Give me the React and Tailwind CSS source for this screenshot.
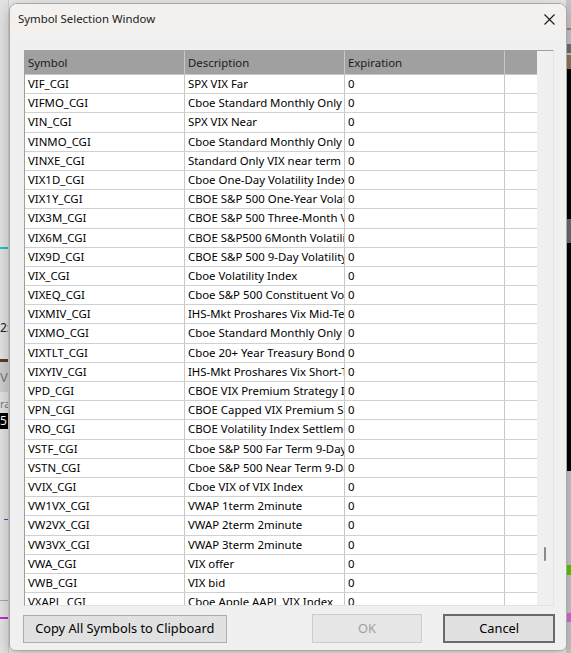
import React from 'react';

const rows = [
  ['VIF_CGI', 'SPX VIX Far'],
  ['VIFMO_CGI', 'Cboe Standard Monthly Only VIX Far'],
  ['VIN_CGI', 'SPX VIX Near'],
  ['VINMO_CGI', 'Cboe Standard Monthly Only VIX Near'],
  ['VINXE_CGI', 'Standard Only VIX near term'],
  ['VIX1D_CGI', 'Cboe One-Day Volatility Index'],
  ['VIX1Y_CGI', 'CBOE S&P 500 One-Year Volatility Index'],
  ['VIX3M_CGI', 'CBOE S&P 500 Three-Month Volatility Index'],
  ['VIX6M_CGI', 'CBOE S&P500 6Month Volatility Index'],
  ['VIX9D_CGI', 'CBOE S&P 500 9-Day Volatility Index'],
  ['VIX_CGI', 'Cboe Volatility Index'],
  ['VIXEQ_CGI', 'Cboe S&P 500 Constituent Volatility'],
  ['VIXMIV_CGI', 'IHS-Mkt Proshares Vix Mid-Term'],
  ['VIXMO_CGI', 'Cboe Standard Monthly Only VIX'],
  ['VIXTLT_CGI', 'Cboe 20+ Year Treasury Bond ETF Volatility'],
  ['VIXYIV_CGI', 'IHS-Mkt Proshares Vix Short-Term'],
  ['VPD_CGI', 'CBOE VIX Premium Strategy Index'],
  ['VPN_CGI', 'CBOE Capped VIX Premium Strategy'],
  ['VRO_CGI', 'CBOE Volatility Index Settlement'],
  ['VSTF_CGI', 'Cboe S&P 500 Far Term 9-Day'],
  ['VSTN_CGI', 'Cboe S&P 500 Near Term 9-Day'],
  ['VVIX_CGI', 'Cboe VIX of VIX Index'],
  ['VW1VX_CGI', 'VWAP 1term 2minute'],
  ['VW2VX_CGI', 'VWAP 2term 2minute'],
  ['VW3VX_CGI', 'VWAP 3term 2minute'],
  ['VWA_CGI', 'VIX offer'],
  ['VWB_CGI', 'VIX bid'],
  ['VXAPL_CGI', 'Cboe Apple AAPL VIX Index'],
];

const font = { fontFamily: '"Noto Sans", "Open Sans", sans-serif' };

function Cell({ children, last }) {
  return (
    <div className={`h-full overflow-hidden whitespace-nowrap pl-[3px] leading-[18px] ${last ? 'flex-1' : 'w-[160px] shrink-0 border-r border-[#c8c8c8]'}`}>
      {children}
    </div>
  );
}

// slivers of the trading app that peek out on both sides of the dialog
function LeftEdge() {
  return (
    <div className="flex h-full w-[9px] flex-col overflow-hidden border-r border-[#cfcfcf] bg-[#e4e4e4] text-[#222]">
      <div className="h-[247px] shrink-0" />
      <div className="h-[2px] shrink-0 bg-[#19c6cf]" />
      <div className="h-[71px] shrink-0" />
      <div className="h-[16px] shrink-0 text-[12px] leading-[16px]">2:</div>
      <div className="h-[23px] shrink-0" />
      <div className="h-[3px] shrink-0 bg-[#5a3b2a]" />
      <div className="h-[30px] shrink-0 bg-[#cfcfcf] text-[13px] leading-[30px] text-[#777]">V</div>
      <div className="h-[21px] shrink-0 pt-[5px] text-[11px] leading-[14px] text-[#777]">ra</div>
      <div className="h-[16px] shrink-0 bg-black text-[12px] leading-[16px] text-white">5</div>
      <div className="h-[90px] shrink-0" />
      <div className="ml-[4px] h-[1px] shrink-0 bg-[#3050d0]" />
      <div className="h-[80px] shrink-0" />
      <div className="h-[1px] shrink-0 bg-[#a8a8a8]" />
      <div className="h-[16px] shrink-0" />
      <div className="h-[2px] shrink-0 bg-[#c02bd0]" />
    </div>
  );
}

function RightEdge() {
  return (
    <div className="flex h-full w-[5px] flex-col bg-[#c8c8c8]">
      <div className="h-[28px] shrink-0" />
      <div className="h-[2px] shrink-0 bg-[#8a8a8a]" />
      <div className="h-[14px] shrink-0" />
      <div className="h-[9px] shrink-0 bg-[#707070]" />
      <div className="h-[2px] shrink-0" />
      <div className="h-[14px] shrink-0 bg-[#8c7a55]" />
      <div className="flex h-[402px] shrink-0 flex-col bg-black">
        <div className="h-[150px] shrink-0" />
        <div className="h-[24px] shrink-0 bg-[#6c6c6c]" />
      </div>
      <div className="h-[94px] shrink-0" />
      <div className="h-[10px] shrink-0 bg-[#5fc800]" />
      <div className="h-[38px] shrink-0" />
      <div className="h-[9px] shrink-0 bg-[#d070d8]" />
    </div>
  );
}

export default function App() {
  return (
    <div className="relative flex h-[653px] w-[571px] justify-between overflow-hidden bg-[#e9e9e9]" style={font}>
      <LeftEdge />
      <RightEdge />

      <div className="absolute left-[9px] top-[3px] flex h-[648px] w-[558px] flex-col overflow-hidden rounded-t-[8px] rounded-b-[6px] border border-[#a9a9a9] bg-[#f0f0f0] shadow-[0_4px_16px_rgba(0,0,0,0.25)]">
        <div className="flex h-[30px] shrink-0 items-center justify-between bg-[#f3f0ed] pl-[8px]">
          <span className="text-[11.4px] text-[#1a1a1a]">Symbol Selection Window</span>
          <div className="flex h-full w-[34px] items-center justify-center">
            <svg width="11" height="11" viewBox="0 0 11 11" className="text-[#1a1a1a]">
              <path d="M0.5 0.5 L10.5 10.5 M10.5 0.5 L0.5 10.5" stroke="currentColor" strokeWidth="1.1" />
            </svg>
          </div>
        </div>

        <div className="ml-[14px] mt-[16px] flex h-[556px] w-[530px] shrink-0 border border-t-[#a0a0a0] border-l-[#a0a0a0] border-r-[#e3e3e3] border-b-[#e3e3e3]">
          <div className="flex w-[512px] flex-col overflow-hidden bg-white text-[11.4px] text-black">
            <div className="flex h-[24px] shrink-0 border-b border-[#c8c8c8] bg-[#a0a0a0] text-[#1a1a1a]">
              {['Symbol', 'Description', 'Expiration', ''].map((h, i) => (
                <div key={i} className={`h-full overflow-hidden whitespace-nowrap pl-[3px] leading-[23px] ${i === 3 ? 'flex-1' : 'w-[160px] shrink-0 border-r border-[#c8c8c8]'}`}>
                  {h}
                </div>
              ))}
            </div>
            {rows.map(([sym, desc]) => (
              <div key={sym} className="flex h-[19.2px] shrink-0 border-b border-[#d0d0d0]">
                <Cell>{sym}</Cell>
                <Cell>{desc}</Cell>
                <Cell>0</Cell>
                <Cell last />
              </div>
            ))}
          </div>
          <div className="flex flex-1 flex-col items-center bg-[#f0f0f0] pt-[496px]">
            <div className="h-[14px] w-[2px] rounded-full bg-[#8a8a8a]" />
          </div>
        </div>

        <div className="mt-[8px] flex items-center pl-[13px] pr-[11px] text-[12.8px]">
          <button className="h-[28px] w-[204px] border border-[#adadad] bg-[#e1e1e1] text-black">
            Copy All Symbols to Clipboard
          </button>
          <button disabled className="ml-[85px] h-[29px] w-[111px] border border-[#cccccc] bg-[#e6e6e6] text-[#a0a0a0]">
            OK
          </button>
          <button className="ml-[21px] h-[29px] w-[112px] border-2 border-[#6a6a6a] bg-[#e1e1e1] text-black">
            Cancel
          </button>
        </div>
      </div>
    </div>
  );
}
